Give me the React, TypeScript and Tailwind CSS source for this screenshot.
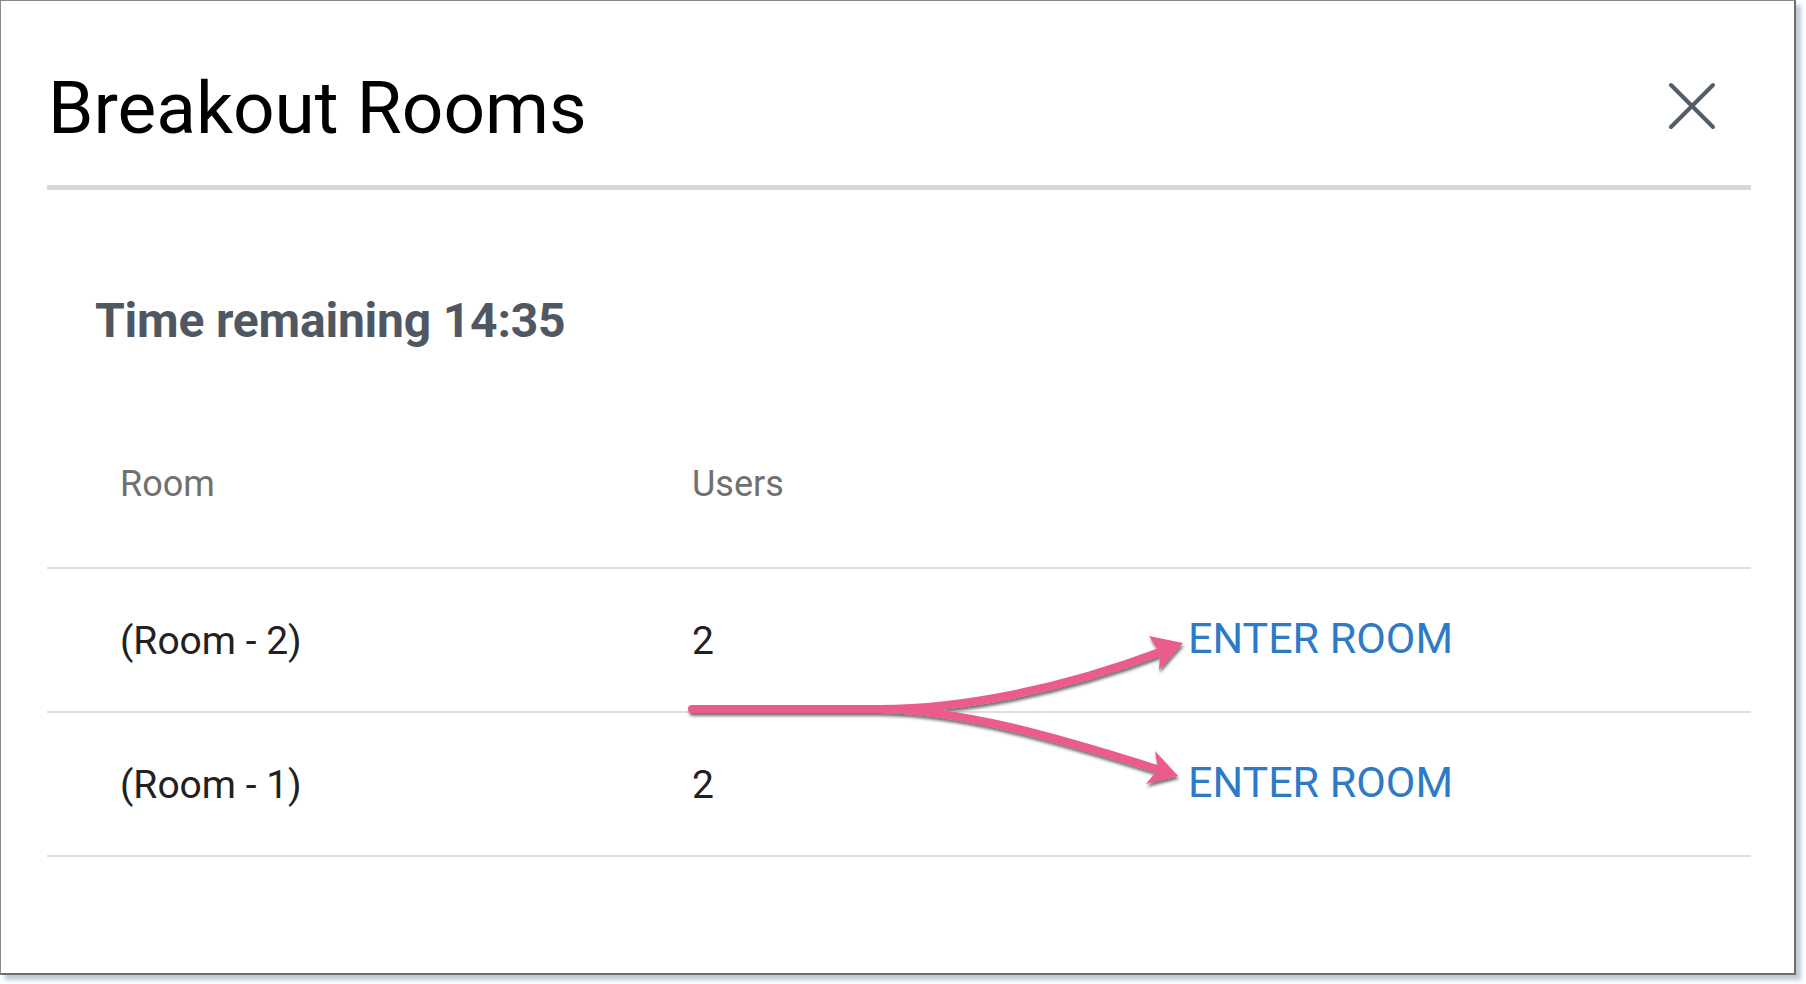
type Room = {
    name: string;
    users: number;
};

const rooms: Room[] = [
    { name: "(Room - 2)", users: 2 },
    { name: "(Room - 1)", users: 2 },
];

const CloseIcon = () => (
    <svg width={48} height={48} viewBox="0 0 48 48" fill="none" stroke="currentColor" strokeWidth={4} strokeLinecap="round">
        <path d="M3 3 L45 45" />
        <path d="M45 3 L3 45" />
    </svg>
);

// annotation drawn over the table: one stroke splitting towards both buttons
const SplitArrow = () => (
    <svg
        className="pointer-events-none absolute left-0 top-0"
        width={1806}
        height={984}
        viewBox="0 0 1806 984"
    >
        <defs>
            <filter id="arrow-shadow" x="-10%" y="-50%" width="120%" height="200%">
                <feDropShadow dx="1" dy="3" stdDeviation="1.4" floodColor="#000" floodOpacity="0.55" />
            </filter>
        </defs>
        <g filter="url(#arrow-shadow)">
            <g fill="none" stroke="#ec5b8b" strokeWidth="8" strokeLinecap="round">
                <path d="M692 709 L880 709 C960 709 1060 690 1165 650" />
                <path d="M880 709 C960 710 1050 735 1160 770" />
            </g>
            <polygon points="1183,643 1149,636 1160,653 1159,670" fill="#ec5b8b" />
            <polygon points="1178,776 1155,751 1158,769 1146,784" fill="#ec5b8b" />
        </g>
    </svg>
);

export default function App() {
    return (
        <div className="relative h-[984px] w-[1806px] overflow-hidden bg-white font-[Roboto,sans-serif]">
            <div className="flex h-[975px] w-[1796px] flex-col border border-[#8a8a8a] border-r-2 border-b-2 border-r-[#6e6e6e] border-b-[#6e6e6e] bg-white shadow-[5px_5px_4px_rgba(150,166,186,0.6)]">
                <div className="flex items-start justify-between">
                    <h1 className="ml-[47px] mt-[71px] text-[73px] font-normal leading-none text-black">
                        Breakout Rooms
                    </h1>
                    <button className="mr-[78px] mt-[81px] text-[#535d67]">
                        <CloseIcon />
                    </button>
                </div>
                <div className="ml-[46px] mr-[43px] mt-[40px] h-[5px] bg-[#d4d9de]" />

                <div className="ml-[94px] mt-[107px] text-[48px] font-bold leading-none tracking-[-0.2px] text-[#4f5862]">
                    Time remaining 14:35
                </div>

                <div className="ml-[46px] mr-[43px] mt-[121px]">
                    <div className="flex border-b-2 border-[#e0e0e0] pb-[65px] pl-[73px] text-[36px] leading-none text-[#707070]">
                        <div className="w-[572px]">Room</div>
                        <div className="w-[496px]">Users</div>
                        <div className="flex-1" />
                    </div>
                    {rooms.map((room) => (
                        <div
                            key={room.name}
                            className="flex h-[144px] items-center border-b-2 border-[#e0e0e0] pl-[73px] pt-[2px]"
                        >
                            <div className="w-[572px] text-[39px] leading-none text-[#212121]">{room.name}</div>
                            <div className="w-[496px] text-[39px] leading-none text-[#212121]">{room.users}</div>
                            <div className="mb-[5px] flex-1 text-[43px] leading-none text-[#2d7bc5]">
                                ENTER ROOM
                            </div>
                        </div>
                    ))}
                </div>
            </div>
            <SplitArrow />
        </div>
    );
}
